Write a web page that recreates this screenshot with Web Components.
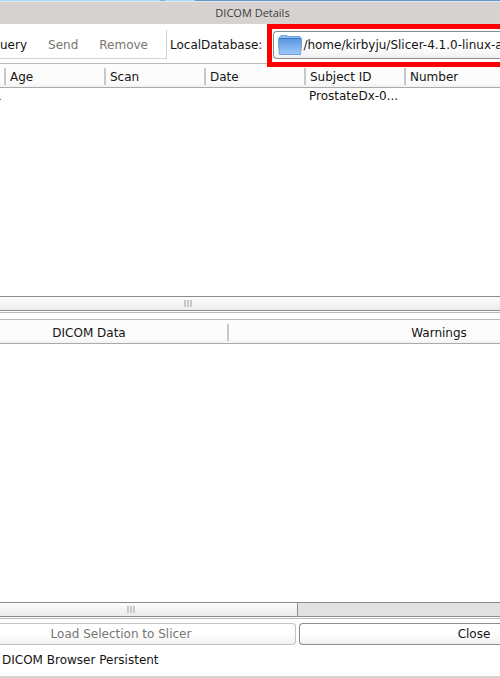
<!DOCTYPE html>
<html lang="en">
<head>
<meta charset="utf-8">
<title>DICOM Details</title>
<style>
  body {
    margin: 0;
    min-height: 100vh;
    display: flex;
    background: #fff;
    color: #141414;
    font: 12px/16px "DejaVu Sans", Verdana, sans-serif;
  }
</style>
</head>
<body>
<dicom-window></dicom-window>

<script>
// Title bar with the strip of desktop above it
class TitleBar extends HTMLElement {
  constructor() {
    super();
    this.attachShadow({ mode: 'open' });
    this.shadowRoot.innerHTML = `
      <style>
        :host { display: block; }
        .desktop { height: 1px; background: linear-gradient(90deg, #a5dcfa 32%, #78b4dc 32% 33%, #a5dcfa 33% 39%, #6496d2 39%); border-bottom: 1px solid #e6e6e6; }
        h1 {
          margin: 0;
          height: 22px;
          padding-left: 5px;
          background: #d6d2d0;
          color: #3c3c3c;
          font: 11px/22px "Open Sans", "Noto Sans", sans-serif;
          text-align: center;
        }
      </style>
      <div class="desktop"></div>
      <h1><slot></slot></h1>
    `;
  }
}
customElements.define('title-bar', TitleBar);

// Flat toolbar button
class ToolButton extends HTMLElement {
  constructor() {
    super();
    this.attachShadow({ mode: 'open' });
    const disabled = this.hasAttribute('disabled') ? 'disabled' : '';
    this.shadowRoot.innerHTML = `
      <style>
        :host { display: block; }
        button { border: 0; padding: 0; background: none; color: #141414; font: inherit; }
        button:disabled { color: #787672; }
      </style>
      <button type="button" ${disabled}><slot></slot></button>
    `;
  }
}
customElements.define('tool-button', ToolButton);

// Directory chooser: label, folder icon, path and the red highlight round it
class DirectoryButton extends HTMLElement {
  constructor() {
    super();
    this.attachShadow({ mode: 'open' });
    this.shadowRoot.innerHTML = `
      <style>
        :host { display: flex; align-items: center; min-width: 0; }
        label { margin: 0 11px 0 3px; white-space: nowrap; }
        .field { position: relative; flex: 1; min-width: 0; margin-top: 1px; }
        .field::after {
          content: "";
          position: absolute;
          inset: -7px 0 -8px -6px;
          border: 5px solid #f00;
          border-right: 0;
          pointer-events: none;
        }
        button {
          display: flex;
          align-items: center;
          gap: 1px;
          box-sizing: border-box;
          width: 100%;
          height: 28px;
          padding: 0 0 0 4px;
          overflow: hidden;
          border: 1px solid #8c8c8c;
          border-right: 0;
          border-radius: 4px 0 0 4px;
          background: linear-gradient(#fff 60%, #f0f0f0);
          color: #141414;
          font: inherit;
          white-space: nowrap;
        }
        svg { flex: none; }
      </style>
      <label for="directory"><slot name="label"></slot></label>
      <div class="field">
        <button type="button" id="directory">
          <svg width="24" height="22" viewBox="0 0 24 22" aria-hidden="true">
            <defs>
              <linearGradient id="front" x1="0" y1="0" x2="0" y2="1">
                <stop offset="0" stop-color="#5a96e1"/>
                <stop offset="1" stop-color="#a0c8fa"/>
              </linearGradient>
            </defs>
            <path d="M1.500 6V3.500Q1.500 2.500 2.500 2.500H3V1.500H9V2.500H21Q22.500 2.500 22.500 3.500V6Z" fill="#8cbef0" stroke="#6ea5dc"/>
            <path d="M.5 4.500H23.500V11L22.500 20.500H1.500L.5 11Z" fill="url(#front)" stroke="#6ea0e1"/>
            <path d="M1 4.500H23" stroke="#3c78c8"/>
          </svg>
          <slot></slot>
        </button>
      </div>
    `;
  }
}
customElements.define('directory-button', DirectoryButton);

// Horizontal scroll bar; --handle sets the handle width, --grip the grip's start
class ScrollTrack extends HTMLElement {
  constructor() {
    super();
    this.attachShadow({ mode: 'open' });
    this.shadowRoot.innerHTML = `
      <style>
        :host {
          display: block;
          background: #e1e1e1;
          border-top: 1px solid #8c8c8c;
          border-bottom: 1px solid #8c8c8c;
        }
        .handle {
          display: flex;
          align-items: center;
          box-sizing: border-box;
          width: var(--handle, 100%);
          height: 13px;
          padding-left: var(--grip, 0);
          background: linear-gradient(#fcfcfc, #ececec);
          border-right: var(--edge, 0) solid #8c8c8c;
        }
        .grip { width: 8px; height: 7px; background: repeating-linear-gradient(90deg, #c8c8c8 0 2px, transparent 2px 3px); }
      </style>
      <div class="handle"><div class="grip"></div></div>
    `;
  }
}
customElements.define('scroll-track', ScrollTrack);

const tableStyle = `
  :host { display: flex; flex-direction: column; border-top: 1px solid #b9b9b9; border-bottom: 1px solid #b9b9b9; }
  .view { flex: 1; overflow: hidden; }
  table { width: 100%; table-layout: fixed; border-collapse: separate; border-spacing: 0; }
  th {
    box-sizing: border-box;
    height: 24px;
    padding: 2px 0 0 4px;
    border-bottom: 1px solid #aaa;
    background:
      linear-gradient(#c8c8c8, #c8c8c8) right 4px / 2px 17px no-repeat,
      linear-gradient(#fcfcfc 80%, #f2f2f2);
    font-weight: normal;
    text-align: left;
  }
  th:last-child { background: linear-gradient(#fcfcfc 80%, #f2f2f2); }
  td { padding: 0 0 0 3px; overflow: hidden; white-space: nowrap; }
  scroll-track { margin-bottom: 1px; }
`;

// Patient / study tree
class StudyTable extends HTMLElement {
  constructor() {
    super();
    this.attachShadow({ mode: 'open' });
    this.shadowRoot.innerHTML = `
      <style>
        ${tableStyle}
        .c0 { width: 6px; }
        .col { width: 100px; }
        th:first-child { padding: 0; }
        td:first-child { padding: 0; text-indent: -6px; }
        scroll-track { --grip: 184px; }
      </style>
      <div class="view">
        <table>
          <colgroup><col class="c0"><col class="col"><col class="col"><col class="col"><col class="col"><col></colgroup>
          <thead>
            <tr><th></th><th>Age</th><th>Scan</th><th>Date</th><th>Subject ID</th><th>Number</th></tr>
          </thead>
          <tbody>
            <tr><td>1</td><td></td><td></td><td></td><td>ProstateDx-0...</td><td></td></tr>
          </tbody>
        </table>
      </div>
      <scroll-track></scroll-track>
    `;
  }
}
customElements.define('study-table', StudyTable);

// Loadable items with their warnings
class LoadableTable extends HTMLElement {
  constructor() {
    super();
    this.attachShadow({ mode: 'open' });
    this.shadowRoot.innerHTML = `
      <style>
        ${tableStyle}
        .data { width: 229px; }
        th { text-align: center; }
        th:first-child { padding-left: 0; padding-right: 51px; }
        th:last-child { padding-left: 149px; }
        scroll-track { --handle: 298px; --grip: 127px; --edge: 1px; }
      </style>
      <div class="view">
        <table>
          <colgroup><col class="data"><col></colgroup>
          <thead><tr><th>DICOM Data</th><th>Warnings</th></tr></thead>
        </table>
      </div>
      <scroll-track></scroll-track>
    `;
  }
}
customElements.define('loadable-table', LoadableTable);

// Bottom row of push buttons
class ActionBar extends HTMLElement {
  constructor() {
    super();
    this.attachShadow({ mode: 'open' });
    this.shadowRoot.innerHTML = `
      <style>
        :host { display: grid; grid-template-columns: minmax(0, 296fr) minmax(0, 201fr); gap: 3px; }
        button {
          box-sizing: border-box;
          height: 22px;
          border: 1px solid #8c8c8c;
          background: linear-gradient(#fff 50%, #f0f0f0);
          color: #141414;
          font: inherit;
        }
        .load { padding: 0 53px 0 0; border-color: #c3c3c3; border-left: 0; border-radius: 0 4px 4px 0; color: #787672; }
        .close { padding: 0 0 0 148px; border-right: 0; border-radius: 4px 0 0 4px; }
      </style>
      <button type="button" class="load" disabled>Load Selection to Slicer</button>
      <button type="button" class="close">Close</button>
    `;
  }
}
customElements.define('action-bar', ActionBar);

class DicomWindow extends HTMLElement {
  constructor() {
    super();
    this.attachShadow({ mode: 'open' });
    this.shadowRoot.innerHTML = `
      <style>
        :host {
          flex: 1;
          min-width: 0;
          display: flex;
          flex-direction: column;
          box-sizing: border-box;
          border-bottom: 2px solid #d6d2d0;
          overflow: hidden;
        }
        .toolbar { display: flex; align-items: center; height: 39px; }
        .tools {
          display: flex;
          align-items: center;
          gap: 21px;
          box-sizing: border-box;
          height: 29px;
          margin-top: 1px;
          padding: 2px 18px 0 0;
          border-right: 1px solid #d2d2d2;
          border-bottom: 1px solid #d2d2d2;
        }
        directory-button { flex: 1; margin-top: 2px; }
        study-table { flex: 250; }
        loadable-table { flex: 300; margin-top: 6px; }
        action-bar { margin-top: 4px; }
        .status { padding: 7px 2px 8px; }
      </style>
      <title-bar>DICOM Details</title-bar>
      <div class="toolbar">
        <div class="tools">
          <tool-button>uery</tool-button>
          <tool-button disabled>Send</tool-button>
          <tool-button disabled>Remove</tool-button>
        </div>
        <directory-button>
          <span slot="label">LocalDatabase:</span>/home/kirbyju/Slicer-4.1.0-linux-a
        </directory-button>
      </div>
      <study-table></study-table>
      <loadable-table></loadable-table>
      <action-bar></action-bar>
      <div class="status">DICOM Browser Persistent</div>
    `;
  }
}
customElements.define('dicom-window', DicomWindow);
</script>
</body>
</html>
